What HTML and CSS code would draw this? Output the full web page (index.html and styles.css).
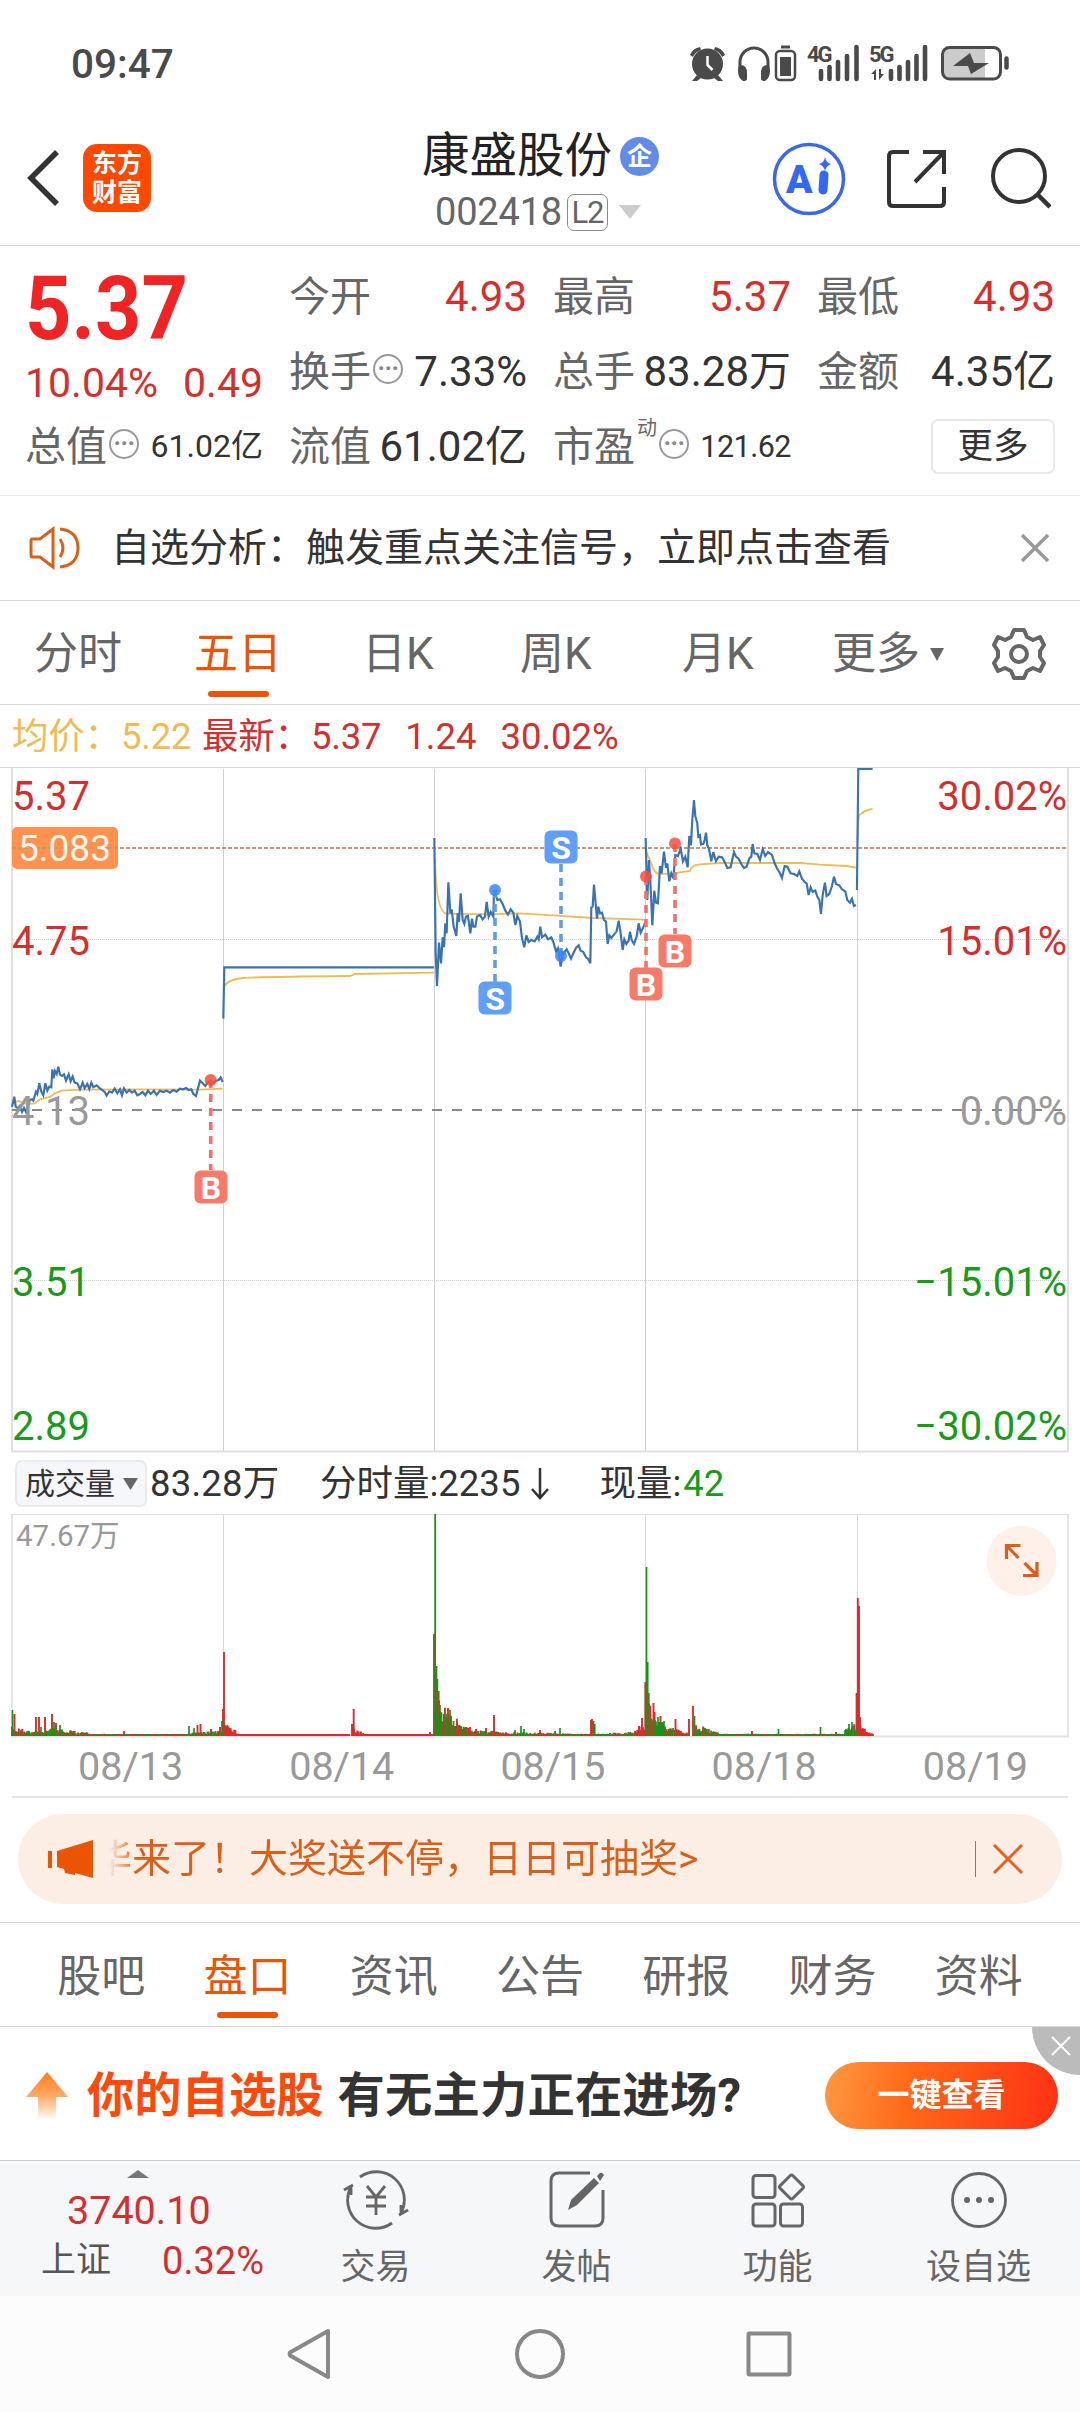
FILE: index.html
```html
<!DOCTYPE html>
<html lang="zh-CN">
<head>
  <meta charset="UTF-8" />
  <title>康盛股份 002418</title>
  <link rel="stylesheet" href="styles.css">
</head>
<body>
  <div class="status-bar">
    <span class="time">09:47</span>
    <svg class="status-icons" width="324" height="40" viewBox="688 43 324 40">
      <g fill="#4a4a4a">
        <circle cx="707.5" cy="64" r="15.5" />
        <path d="M690 55q3-7 10-8l1 3q-6 2-8 7zM725 55q-3-7-10-8l-1 3q6 2 8 7zM697 75l-5 6h5l4-3zM718 75l5 6h-5l-4-3z" />
        <path d="M707.500 56v9l5 5" fill="none" stroke="#fff" stroke-width="2.500" />
        <path d="M740 72V62a14 14 0 0 1 28 0v10" fill="none" stroke="#4a4a4a" stroke-width="3" />
        <path d="M739 65q8-1 8 8v6q0 2-4 2-5-3-5-10zM769 65q-8-1-8 8v6q0 2 4 2 5-3 5-10z" />
        <rect x="776" y="51" width="19" height="29" rx="4" fill="none" stroke="#4a4a4a" stroke-width="2.500" />
        <rect x="780" y="57" width="11" height="19" />
        <rect x="781" y="45.500" width="9" height="3" />
        <path d="M821 71v8M829.500 67v12M838 62v17M847 56v23M856.500 47v32M891 71v8M899.500 67v12M908 62v17M916.500 56v23M925 47v32" stroke="#4a4a4a" stroke-width="4.600" stroke-linecap="round" />
        <path d="M871 74l5-5v11h-2v-6zM884 74l-5 6V69h2v5z" />
        <text x="807" y="62" class="net">4G</text>
        <text x="869" y="62" class="net">5G</text>
        <rect x="943" y="49" width="42" height="29" fill="#ccc" />
        <rect x="942.500" y="47.500" width="58" height="31.500" rx="7" fill="none" stroke="#4a4a4a" stroke-width="3" />
        <path d="M1006.500 58.500v9" stroke="#4a4a4a" stroke-width="4.500" stroke-linecap="round" />
        <path d="M970 53l-17 13h15l3 8 18-11h-15z" />
      </g>
    </svg>
  </div>

  <div class="header">
    <div class="header-left">
      <svg width="36" height="60" viewBox="0 0 36 60"><path d="M31 4L5 30l26 26" fill="none" stroke="#333" stroke-width="5.500" /></svg>
      <div class="logo">东方<br>财富</div>
    </div>
    <div class="stock">
      <div class="stock-name">康盛股份<span class="ent">企</span></div>
      <div class="stock-code">002418<span class="level">L2</span><svg width="22" height="14" viewBox="0 0 22 14"><path d="M0 0h22L11 14z" fill="#ccc" /></svg></div>
    </div>
    <div class="header-right">
      <svg width="76" height="76" viewBox="0 0 76 76">
        <circle cx="38" cy="38" r="34.500" fill="none" stroke="#3c68e8" stroke-width="3.500" />
        <text x="15" y="52" class="ai">A</text>
        <path d="M53 34l-1 15" stroke="#3567f5" stroke-width="9" stroke-linecap="round" />
        <path d="M54 16q1 6 6 7-5 2-6 7-1-5-6-7 5-1 6-7z" fill="#3567f5" />
      </svg>
      <svg width="60" height="60" viewBox="0 0 60 60"><path d="M22 3H6q-4 0-4 4v46q0 4 4 4h47q4 0 4-4V38M36 3h21v22M57 3L28 33" fill="none" stroke="#333" stroke-width="4" /></svg>
      <svg width="62" height="62" viewBox="0 0 62 62"><circle cx="30" cy="28" r="26" fill="none" stroke="#333" stroke-width="4" /><path d="M48 46l13 13" stroke="#333" stroke-width="4.500" /></svg>
    </div>
  </div>

  <div class="quote">
    <div class="price">
      <div class="price-now"><span>5.37</span></div>
      <div class="price-change"><span>10.04%</span><span>0.49</span></div>
    </div>
    <div class="cell"><label>今开</label><b class="up">4.93</b></div>
    <div class="cell"><label>最高</label><b class="up">5.37</b></div>
    <div class="cell"><label>最低</label><b class="up">4.93</b></div>
    <div class="cell"><label>换手</label><i class="dots">···</i><b>7.33%</b></div>
    <div class="cell"><label>总手</label><b>83.28万</b></div>
    <div class="cell"><label>金额</label><b>4.35亿</b></div>
    <div class="cell"><label>总值</label><i class="dots">···</i><b class="small">61.02亿</b></div>
    <div class="cell"><label>流值</label><b>61.02亿</b></div>
    <div class="cell"><label>市盈</label><sup>动</sup><i class="dots">···</i><b class="small pe">121.62</b></div>
    <div class="cell"><span class="more-btn">更多</span></div>
  </div>

  <div class="notice">
    <svg width="52" height="44" viewBox="0 0 52 44" fill="none" stroke="#d9601a" stroke-width="3">
      <path d="M3 13h8L24 3v38L11 31H3q-1 0-1-2V15q0-2 1-2zM31 13q6 9 0 18M31 3q18 2 18 19T31 41" />
    </svg>
    <span>自选分析：触发重点关注信号，立即点击查看</span>
    <svg class="close" width="30" height="30" viewBox="0 0 30 30"><path d="M2 2l26 26M28 2L2 28" stroke="#999" stroke-width="3.500" /></svg>
  </div>

  <div class="period-tabs">
    <span>分时</span>
    <span class="active">五日</span>
    <span>日K</span>
    <span>周K</span>
    <span>月K</span>
    <span>更多<svg width="14" height="13" viewBox="0 0 14 13"><path d="M0 0h14L7 13z" fill="#666" /></svg></span>
    <svg class="gear" width="54" height="54" viewBox="-27 -27 54 54" fill="none" stroke="#666" stroke-width="4" stroke-linejoin="round">
      <path d="M-5-24H5L8-17 14-14 21-17 25-9 21-3V3L25 9 21 17 14 14 8 17 5 24H-5L-8 17-14 14-21 17-25 9-21 3V-3L-25-9-21-17-14-14-8-17Z" />
      <circle r="8" />
    </svg>
  </div>

  <div class="legend">
    <span class="avg">均价：5.22</span>
    <span class="last">最新：5.37</span>
    <span class="last">1.24</span>
    <span class="last">30.02%</span>
  </div>

  <svg class="chart" width="1080" height="686" viewBox="0 767 1080 686">
    <!-- grid -->
    <path d="M223.500 769v682M434.500 769v682M645.500 769v682M857.500 769v682" stroke="#d0d0d0" />
    <path d="M12 768v683M1068 768v683M11 1451.500h1058" stroke="#e0e0e0" stroke-width="2" />
    <path d="M12 939.500h1056M12 1280.500h1056" stroke="#d0d0d0" stroke-dasharray="1 1" />
    <path d="M12 1110h1056" stroke="#888" stroke-width="2" stroke-dasharray="10 10" />
    <rect x="12" y="827" width="106" height="42" rx="5" fill="#ff924e" />
    <path d="M12 848h1056" stroke="#d29370" stroke-width="1.800" stroke-dasharray="4 2" />

    <!-- average line -->
    <g fill="none" stroke="#f0bb55" stroke-width="5.500">
      <path transform="translate(0 740) scale(.3333)" d="M36 1090L55 1083 80 1092 105 1090 120 1078 150 1071 165 1060 185 1052 240 1049 400 1048 600 1049 668 1046M673 740Q682 718 730 714Q760 711 1050 708L1065 702 1302 698" />
      <path transform="translate(420 740) scale(.3333)" d="M45 355Q48 520 80 521L200 523 300 520 400 526 520 534 672 539M677 330Q690 362 696 375 703 402 720 402L760 400 810 393Q815 374 840 373L900 369 1140 369 1200 374 1280 378 1308 383M1313 300Q1313 230 1320 224 1335 210 1358 207" />
    </g>

    <!-- price line -->
    <g fill="none" stroke="#3a73b4" stroke-width="6.500">
      <path transform="translate(0 740) scale(.3333)" d="M36 1100L43 1070 47 1100 55 1105 60 1098 66 1116 72 1104 78 1116 84 1096 90 1080 96 1078 100 1082 108 1055 112 1062 118 1030 124 1055 130 1066 136 1030 142 1052 148 1040 154 1042 157 988 161 1015 165 993 170 1002 175 980 180 1004 186 1008 192 1003 198 1022 206 1003 212 1024 218 1010 224 1028 232 1030 240 1048 248 1028 254 1045 262 1032 268 1047 274 1028 280 1042 290 1036 298 1044 306 1050 314 1056 320 1067 328 1054 336 1058 344 1046 352 1060 360 1048 366 1066 372 1045 380 1058 388 1050 396 1058 404 1052 412 1066 420 1062 428 1056 436 1066 444 1052 452 1062 462 1052 470 1065 480 1052 490 1056 500 1052 510 1058 520 1050 530 1055 540 1046 550 1048 558 1044 566 1050 574 1048 580 1062 588 1068 594 1045 600 1022 608 1030 616 1038 622 1028 630 1022 640 1028 648 1022 656 1020 662 1012 668 1026M670 836L673 682 1302 682" />
      <path transform="translate(420 740) scale(.3333)" d="M43 294L47 640 51 738 57 608 63 670 68 592 72 622 76 550 80 580 85 427 91 520 95 508 101 560 109 588 113 520 117 546 122 460 128 540 133 552 138 530 144 528 151 580 156 536 160 560 166 560 171 530 180 525 188 538 195 530 200 486 206 530 212 516 220 530 222 450 226 460 232 480 240 478 248 492 256 512 264 524 272 508 280 518 286 555 292 528 300 545 306 594 313 622 319 586 326 606 334 600 344 604 352 590 356 598 361 560 366 592 376 584 384 598 394 592 400 606 408 634 414 625 422 680 428 645 434 636 440 628 446 640 453 656 460 640 468 624 476 616 482 632 490 636 498 652 504 656 511 670 514 502 518 500 522 434 527 490 531 536 535 500 540 520 546 518 552 540 558 545 563 612 568 586 574 594 582 584 590 574 596 542 601 572 608 630 613 598 619 612 626 602 630 575 635 600 642 612 650 590 656 550 662 578 670 562 677 545M677 294L682 480 687 360 691 420 697 556 703 452 708 488 714 490 720 378 725 400 732 335 738 384 742 370 748 424 754 400 760 415 766 345 774 348 782 326 789 364 796 350 803 382 808 288 813 316 817 240 822 180 826 228 832 250 835 290 840 286 843 314 850 312 854 300 858 278 862 316 867 326 874 364 880 336 888 364 896 350 906 352 914 366 922 384 932 382 942 336 948 350 956 356 964 372 972 384 980 380 988 355 994 350 998 312 1003 340 1012 342 1020 360 1028 328 1036 348 1044 336 1056 345 1064 370 1072 386 1080 400 1086 414 1094 378 1102 380 1112 400 1122 402 1132 408 1138 394 1146 416 1154 426 1160 430 1166 465 1172 442 1178 456 1186 452 1192 470 1198 480 1203 522 1208 466 1215 428 1220 468 1228 462 1236 438 1242 410 1248 432 1258 436 1266 448 1276 454 1282 480 1290 488 1296 476 1302 498 1308 495M1311 450L1315 87 1358 87" />
    </g>

    <!-- axis labels -->
    <g class="axis">
      <text x="12" y="809.500" fill="#d32f2f">5.37</text>
      <text x="18" y="861" class="cost">5.083</text>
      <text x="12" y="954.500" fill="#d32f2f">4.75</text>
      <text x="12" y="1124.500" fill="#999">4.13</text>
      <text x="12" y="1295.500" fill="#1a9a1a">3.51</text>
      <text x="12" y="1439.500" fill="#1a9a1a">2.89</text>
      <g text-anchor="end">
        <text x="1067" y="809.500" fill="#d32f2f">30.02%</text>
        <text x="1067" y="954.500" fill="#d32f2f">15.01%</text>
        <text x="1067" y="1124.500" fill="#999">0.00%</text>
        <text x="1067" y="1295.500" fill="#1a9a1a">−15.01%</text>
        <text x="1067" y="1439.500" fill="#1a9a1a">−30.02%</text>
      </g>
    </g>

    <!-- buy / sell markers -->
    <g class="mark buy">
      <path d="M210.700 1080v90M646 877v91M675 844v90" />
      <circle cx="210.700" cy="1080" r="6" /><circle cx="646" cy="876.500" r="6" /><circle cx="675" cy="843.500" r="6" />
      <rect x="194.500" y="1170.500" width="33" height="33" rx="6" />
      <rect x="629.500" y="967.500" width="33" height="33" rx="6" />
      <rect x="658.500" y="934.500" width="33" height="33" rx="6" />
      <text x="211" y="1199">B</text><text x="646" y="996">B</text><text x="675" y="963">B</text>
    </g>
    <g class="mark sell">
      <path d="M495 890v92M561 956v-94" />
      <circle cx="495" cy="890" r="6" /><circle cx="561" cy="956" r="6" />
      <rect x="478.500" y="981.500" width="33" height="33" rx="6" />
      <rect x="544.500" y="830.500" width="33" height="33" rx="6" />
      <text x="495" y="1010">S</text><text x="561" y="859">S</text>
    </g>
  </svg>

  <div class="volume-info">
    <span class="select">成交量<svg width="15" height="12" viewBox="0 0 15 12"><path d="M0 0h15L7.500 12z" fill="#666" /></svg></span>
    <span class="vol-total">83.28万</span>
    <span class="vol-min">分时量:2235</span>
    <svg class="down" width="18" height="32" viewBox="0 0 18 32"><path d="M9 0v30M1 21l8 9 8-9" fill="none" stroke="#333" stroke-width="2.500" /></svg>
    <span>现量:<em>42</em></span>
  </div>

  <svg class="volume" width="1080" height="224" viewBox="0 1514 1080 224">
    <path d="M223.500 1514v222M434.500 1514v222M645.500 1514v222M857.500 1514v222" stroke="#d8d8d8" />
    <path d="M12 1514.500h1056" stroke="#e0e0e0" />
    <path d="M12 1514v223M1068 1514v223M11 1736.500h1058" stroke="#e4e4e4" stroke-width="2" fill="none" />
    <text x="16" y="1545.500" class="vol-max">47.67万</text>
    <g id="bars"></g>
    <circle cx="1021.500" cy="1561" r="35" fill="#fff1e9" />
    <path d="M1006.500 1559v-13.500h14M1006.500 1545.500l12 12.500M1037 1562v13.500h-14M1037 1575.500l-12.500-12.500" fill="none" stroke="#d9601a" stroke-width="3.200" />
  </svg>

  <div class="dates">
    <span>08/13</span><span>08/14</span><span>08/15</span><span>08/18</span><span>08/19</span>
  </div>

  <div class="promo">
    <svg width="46" height="40" viewBox="0 0 46 40" fill="#ea5504"><path d="M0 12h4v17H0zM9 12L45 1v38l-18-5v2l-10-2-1-4-7-2z" /></svg>
    <div class="promo-text"><span>华来了！大奖送不停，日日可抽奖&gt;</span></div>
    <i class="bar"></i>
    <svg width="32" height="32" viewBox="0 0 32 32"><path d="M2 2l28 28M30 2L2 30" stroke="#e0621c" stroke-width="3" /></svg>
  </div>

  <div class="info-tabs">
    <span>股吧</span><span class="active">盘口</span><span>资讯</span><span>公告</span><span>研报</span><span>财务</span><span>资料</span>
  </div>

  <div class="banner">
    <svg width="42" height="48" viewBox="0 0 42 48">
      <defs><linearGradient id="up" x1="0" y1="0" x2="0" y2="1"><stop offset="0" stop-color="#ff7d1e" /><stop offset=".5" stop-color="#ffa965" /><stop offset="1" stop-color="#fff" /></linearGradient></defs>
      <path d="M21 0l21 25H30v23H12V25H0z" fill="url(#up)" />
    </svg>
    <span class="hot">你的自选股</span>
    <span class="ask">有无主力正在进场?</span>
    <span class="go">一键查看</span>
    <div class="corner"><svg width="20" height="20" viewBox="0 0 20 20"><path d="M1 1l18 18M19 1L1 19" stroke="#fff" stroke-width="2" /></svg></div>
  </div>

  <div class="toolbar">
    <div class="index">
      <svg width="22" height="8" viewBox="0 0 22 8"><path d="M11 0l11 8H0z" fill="#777" /></svg>
      <div class="index-value">3740.10</div>
      <div class="index-row"><span>上证</span><b>0.32%</b></div>
    </div>
    <div class="tool">
      <svg width="66" height="60" viewBox="-33 -30 66 60" fill="none" stroke="#666" stroke-width="2.800">
        <path d="M-16-23A28 28 0 0 1 25 13M16 23A28 28 0 0 1-25-13M23 15l9-5M25 14V5M-23-15l-9 5M-25-14V-5" />
        <path d="M-9-14L0-3 9-14M0-3V15M-10-3h20M-10 6h20" />
      </svg>
      <span>交易</span>
    </div>
    <div class="tool">
      <svg width="60" height="60" viewBox="0 0 60 60" fill="none" stroke="#666" stroke-width="3">
        <path d="M43 3H12Q4 3 4 11v37q0 8 8 8h36q8 0 8-8V20" />
        <path d="M21 40l3-10L47 8l5 5-22 22zM50 6l3-3q2-1 4 2l-4 6z" fill="#666" stroke="none" />
      </svg>
      <span>发帖</span>
    </div>
    <div class="tool">
      <svg width="60" height="60" viewBox="0 0 60 60" fill="none" stroke="#666" stroke-width="3">
        <rect x="5" y="5.500" width="22" height="22" rx="3" /><rect x="5" y="34" width="22" height="22" rx="3" /><rect x="32.500" y="34" width="22" height="22" rx="3" />
        <rect x="-9" y="-9" width="18" height="18" rx="2" transform="translate(43.500 17) rotate(45)" />
      </svg>
      <span>功能</span>
    </div>
    <div class="tool">
      <svg width="60" height="60" viewBox="0 0 60 60"><circle cx="30" cy="30" r="26.500" fill="none" stroke="#666" stroke-width="2.800" /><g fill="#666"><circle cx="18" cy="30" r="3" /><circle cx="30" cy="30" r="3" /><circle cx="42" cy="30" r="3" /></g></svg>
      <span>设自选</span>
    </div>
  </div>

  <div class="nav">
    <svg width="1080" height="116" viewBox="0 0 1080 116" fill="none" stroke="#888" stroke-width="4" stroke-linejoin="round">
      <path d="M328 35v46L290 59.500q-1-1.500 0-3z" />
      <circle cx="540" cy="58" r="23" />
      <rect x="748.500" y="37.500" width="41" height="41" rx="1" />
    </svg>
  </div>

  <script>
    const base = 1736;
    let red = "", green = "";

    function bar(x, h, color) {
      const d = "M" + x + " " + base + "v-" + h;
      if (color === "r") red += d; else green += d;
    }

    // low volume between the spikes: [from, to, start height, end height, red share]
    const runs = [
      [12, 33, 9, 4, 0.6], [33, 62, 4, 8, 0.5], [62, 88, 6, 3, 0.5], [88, 190, 2, 1.5, 0.7], [190, 222, 3, 5, 0.6],
      [225, 240, 13, 2, 1], [240, 350, 1, 1, 1], [354, 366, 8, 1, 1], [366, 434, 1, 1, 1],
      [438, 450, 32, 22, 0.5], [450, 475, 20, 4, 0.5], [475, 540, 5, 3, 0.5], [540, 590, 3, 2, 0.6], [595, 635, 2, 4, 0.5],
      [635, 645, 5, 12, 0.9], [648, 665, 30, 12, 0.5], [665, 690, 10, 3, 0.7], [695, 718, 11, 3, 0.3],
      [718, 845, 2, 2, 0.5], [845, 857, 6, 12, 0.4], [858, 874, 12, 1, 1]
    ];
    runs.forEach(([a, b, h1, h2, share]) => {
      for (let x = a; x < b; x += 1.15) {
        const n = Math.abs(Math.sin(x * 12.9898) * 43758.5453) % 1;
        const m = Math.abs(Math.sin(x * 78.233) * 12543.123) % 1;
        const h = (h1 + (h2 - h1) * (x - a) / (b - a)) * (0.5 + n * 0.65);
        bar(x.toFixed(1), Math.max(2, h).toFixed(1), m <= share ? "r" : "g");
      }
    });

    const spikes = [
      [12.5, 26, "g"], [14.5, 22, "r"], [36, 19, "r"], [39, 19, "r"], [41, 9, "g"], [45, 19, "r"], [52, 22, "r"], [54, 14, "g"],
      [56, 13, "r"], [60, 11, "g"], [124, 5, "r"], [189, 10, "g"], [194, 8, "g"], [197.5, 11, "r"], [200.5, 12, "r"], [211, 7, "r"],
      [220, 9, "r"], [222, 15, "g"], [223, 27, "r"], [224, 84, "r"], [352, 12, "r"], [353.7, 27, "r"], [430, 4, "r"],
      [434, 102, "r"], [435.2, 222, "g"], [436.5, 70, "g"], [437.4, 57, "g"], [438.6, 45, "r"], [440, 31, "g"], [448, 28, "r"],
      [450, 26, "g"], [453.5, 15, "g"], [457, 14, "r"], [470, 9, "r"], [476, 7, "r"], [486, 8, "r"], [494, 21, "r"], [515, 6, "g"],
      [521, 10, "g"], [524, 7, "g"], [540, 6, "r"], [555, 5, "g"], [560, 8, "g"], [591, 16, "r"], [592, 17, "r"], [593.5, 15, "g"],
      [594.7, 12, "g"], [639, 10, "r"], [642, 18, "r"], [645.3, 54, "r"], [646.5, 169, "g"], [647.7, 74, "g"], [648.7, 43, "r"],
      [653.5, 33, "r"], [654.6, 24, "r"], [658, 19, "g"], [660.5, 20, "r"], [664, 15, "g"], [675.5, 17, "r"], [689, 17, "r"],
      [693, 30, "r"], [694.5, 20, "g"], [707, 7, "g"], [752, 5, "r"], [778.5, 7, "g"], [820.5, 9, "g"], [836, 4, "r"],
      [849, 12, "g"], [852, 14, "g"], [856.6, 43, "r"], [857.8, 138, "r"], [859, 130, "r"], [860, 19, "r"]
    ];
    spikes.forEach(s => bar(s[0], s[1], s[2]));

    document.getElementById("bars").innerHTML =
      '<path d="' + red + '" stroke="#dc2b2b" stroke-width="1.9"/>' +
      '<path d="' + green + '" stroke="#1f8f1a" stroke-width="1.7"/>';
  </script>
</body>
</html>
```
FILE: styles.css
```css
* {
  box-sizing: border-box;
}

body {
  margin: 0;
  width: 1080px;
  height: 2412px;
  overflow: hidden;
  background: #fff;
  color: #333;
  font-family: Roboto, "Noto Sans CJK SC", sans-serif;
}

svg {
  display: block;
  flex: none;
}

b, i, em {
  font-weight: normal;
  font-style: normal;
}

.status-bar {
  height: 126px;
  padding: 43px 68px 0 71px;
  display: flex;
  justify-content: space-between;
}

.time {
  font-size: 40.500px;
  font-weight: 500;
  line-height: 43px;
  color: #4a4a4a;
}

.net {
  font-size: 22px;
  font-weight: 700;
  letter-spacing: -2px;
}

.header {
  height: 120px;
  border-bottom: 1px solid #d6d6d6;
  display: grid;
  grid-template-columns: 300px 480px 300px;
}

.header-left {
  display: flex;
  align-items: center;
  padding: 0 0 15px 26px;
}

.logo {
  width: 68px;
  height: 68px;
  margin-left: 21px;
  padding-top: 5px;
  border-radius: 14px;
  background: #ff4800;
  color: #fff;
  font-size: 25px;
  font-weight: 700;
  line-height: 29px;
  text-align: center;
}

.stock-name {
  display: flex;
  align-items: center;
  padding: 0 0 0 122px;
  height: 60px;
  font-size: 47.500px;
  line-height: 60px;
  color: #222;
}

.ent {
  width: 39px;
  height: 39px;
  margin-left: 8px;
  border-radius: 50%;
  background: #628ce8;
  color: #fff;
  font-size: 25px;
  font-weight: 700;
  line-height: 39px;
  text-align: center;
}

.stock-code {
  display: flex;
  align-items: center;
  padding-left: 135px;
  margin-top: 7px;
  font-size: 38px;
  line-height: 38px;
  letter-spacing: -0.200px;
  color: #666;
}

.level {
  width: 41px;
  height: 37px;
  margin: 0 11px 0 5px;
  border: 1.500px solid #888;
  border-radius: 7px;
  font-size: 31px;
  line-height: 35px;
  text-align: center;
  letter-spacing: -1px;
}

.header-right {
  display: flex;
  align-items: center;
  padding-bottom: 14px;
}

.header-right svg:nth-child(1) {
  margin: 0 40px 0 -9px;
}

.header-right svg:nth-child(2) {
  margin-right: 42px;
}

.ai {
  font-size: 39px;
  font-weight: 900;
  fill: #3567f5;
}

.quote {
  height: 250px;
  padding: 13px 25px 0 25px;
  border-bottom: 1px solid #eaeaea;
  display: grid;
  grid-template-columns: repeat(4, 1fr);
  grid-template-rows: repeat(3, 75px);
  column-gap: 26px;
}

.price {
  grid-row: span 2;
  color: #d32f2f;
}

.price-now {
  height: 97px;
  font-size: 89px;
  font-weight: 700;
  line-height: 99px;
  color: #f02424;
}

.price-now span {
  display: inline-block;
  transform: scaleX(0.910);
  transform-origin: left;
}

.price-change {
  display: flex;
  justify-content: space-between;
  font-size: 41px;
  line-height: 55px;
}

.cell {
  display: flex;
  align-items: center;
  line-height: 75px;
  font-size: 42px;
  white-space: nowrap;
}

.cell label {
  padding-top: 2px;
  font-size: 41px;
  color: #666;
}

.cell b {
  margin-left: auto;
}

.cell .small {
  font-size: 32px;
}

.cell .pe {
  font-size: 30.500px;
  letter-spacing: -0.500px;
}

.up {
  color: #d32f2f;
}

.dots {
  width: 30px;
  height: 30px;
  margin: -5px 0 0 2px;
  border: 2px solid #999;
  border-radius: 50%;
  color: #888;
  font-size: 25px;
  font-weight: 700;
  line-height: 26px;
  letter-spacing: -0.500px;
  text-align: center;
}

.cell sup {
  margin: -38px 0 0 2px;
  font-size: 20px;
  line-height: 20px;
  color: #666;
}

.more-btn {
  width: 124px;
  height: 55px;
  margin-left: auto;
  border: 2px solid #e8e8e8;
  border-radius: 7px;
  font-size: 35.500px;
  line-height: 50px;
  text-align: center;
}

.notice {
  height: 105px;
  padding: 0 30px 0 29px;
  border-bottom: 1px solid #d6d6d6;
  display: flex;
  align-items: center;
  font-size: 39px;
  line-height: 103px;
}

.notice span {
  margin-left: 30px;
}

.close {
  margin-left: auto;
}

.period-tabs {
  height: 104px;
  padding-left: 34px;
  border-bottom: 1px solid #d6d6d6;
  display: grid;
  grid-template-columns: 160px 168px 158px 162px 150px 160px 54px;
  font-size: 44px;
  line-height: 106px;
  color: #666;
}

.period-tabs span {
  display: flex;
  align-items: center;
}

.period-tabs span svg {
  margin-left: 10px;
}

.active {
  position: relative;
  color: #ea5504;
}

.active::after {
  content: "";
  position: absolute;
  left: 14px;
  bottom: 10px;
  width: 61px;
  height: 6px;
  border-radius: 3px;
  background: #ea5504;
}

.gear {
  align-self: center;
}

.legend {
  height: 63px;
  padding-left: 12px;
  border-bottom: 1px solid #d6d6d6;
  display: flex;
  font-size: 36.500px;
  line-height: 64px;
}

.avg {
  width: 190px;
  color: #f0bb55;
}

.last {
  margin-right: 24px;
  color: #d32f2f;
}

.avg, .last:nth-child(2) {
  letter-spacing: -0.200px;
}

.chart {
  margin-top: -1px;
}

.axis {
  font-size: 40px;
}

.axis .cost {
  font-size: 37px;
  fill: #fff5ea;
}

.mark {
  font-size: 32px;
  font-weight: 700;
  text-anchor: middle;
}

.mark path {
  stroke-width: 3.600;
  stroke-dasharray: 8 6;
}

.mark text {
  fill: #fff;
}

.buy {
  stroke: none;
  fill: #fa7a69;
}

.buy circle {
  fill: #f4503f;
  fill-opacity: 0.850;
}

.buy path {
  stroke: #ee7468;
}

.sell {
  fill: #5f9ff8;
}

.sell circle {
  fill: #3b86f5;
  fill-opacity: 0.850;
}

.sell path {
  stroke: #609ce8;
}

.volume-info {
  height: 61px;
  padding-left: 15px;
  display: flex;
  align-items: center;
  font-size: 36.500px;
  line-height: 60px;
}

.select {
  width: 132px;
  height: 47px;
  padding-left: 8px;
  border: 2px solid #e8eaee;
  border-radius: 7px;
  background: #f6f7fa;
  display: flex;
  align-items: center;
  justify-content: space-between;
  padding-right: 7px;
  font-size: 30px;
  line-height: 43px;
}

.vol-total {
  width: 173px;
  padding-left: 3px;
  letter-spacing: 0.200px;
}

.down {
  margin: 0 50px 0 11px;
}

.volume-info em {
  margin-left: 2px;
  color: #1a9a1a;
}

.vol-max {
  font-size: 29.500px;
  fill: #999;
}

.dates {
  height: 60px;
  margin: 0 12px;
  border-bottom: 2px solid #e4e4e4;
  display: grid;
  grid-template-columns: repeat(5, 211.200px);
  font-size: 39.500px;
  line-height: 58px;
  text-align: center;
  color: #999;
}

.dates span {
  padding-left: 26px;
}

.promo {
  height: 90px;
  margin: 16px 18px 18px;
  padding: 0 38px 0 30px;
  border-radius: 45px;
  background: #fdeee5;
  display: flex;
  align-items: center;
  font-size: 39px;
  line-height: 89px;
  color: #d9601a;
}

.promo-text {
  flex: 1;
  margin-left: 15px;
  overflow: hidden;
  white-space: nowrap;
  -webkit-mask-image: linear-gradient(to right, transparent, #000 28px);
  mask-image: linear-gradient(to right, transparent, #000 28px);
}

.promo-text span {
  margin-left: -16px;
}

.bar {
  width: 1px;
  height: 36px;
  margin-right: 16px;
  background: #d9601a;
}

.info-tabs {
  height: 105px;
  padding: 0 28px;
  border-top: 1px solid #d6d6d6;
  border-bottom: 1px solid #d6d6d6;
  display: flex;
  font-size: 44px;
  line-height: 108px;
  text-align: center;
  color: #666;
}

.info-tabs span {
  flex: 1;
}

.info-tabs .active {
  color: #ea5504;
}

.info-tabs .active::after {
  left: 43px;
  bottom: 8px;
}

.banner {
  position: relative;
  height: 133px;
  padding: 4px 22px 0 26px;
  display: flex;
  align-items: center;
  font-size: 47.300px;
  font-weight: 700;
  line-height: 130px;
  white-space: nowrap;
}

.hot {
  margin-left: 19px;
  color: #ff4a0c;
}

.ask {
  margin-left: 14px;
  letter-spacing: 0.200px;
}

.go {
  width: 233px;
  height: 67px;
  margin-left: auto;
  border-radius: 34px;
  background: linear-gradient(100deg, #ff9a42, #ff6a1a 35%, #ff3014);
  color: #fff;
  font-size: 32px;
  line-height: 67px;
  text-align: center;
}

.corner {
  position: absolute;
  top: 0;
  right: 0;
  width: 48px;
  height: 48px;
  padding: 9px 0 0 19px;
  border-bottom-left-radius: 48px;
  background: #bbb;
}

.toolbar {
  height: 136px;
  border-top: 1px solid #d0d0d0;
  background: #f6f7f9;
  display: flex;
}

.index {
  width: 275px;
  padding-top: 9px;
}

.index svg {
  margin-left: 127px;
}

.index-value {
  margin-top: 9px;
  font-size: 39.500px;
  line-height: 48px;
  padding-left: 67px;
  color: #d32f2f;
}

.index-row {
  display: flex;
  justify-content: space-between;
  padding: 0 11px 0 41px;
  font-size: 35px;
  line-height: 52px;
}

.index-row span {
  color: #555;
}

.index-row b {
  font-size: 38px;
  color: #d32f2f;
}

.tool {
  width: 201px;
  padding-top: 9px;
  display: flex;
  flex-direction: column;
  align-items: center;
  font-size: 35px;
  line-height: 76px;
  color: #666;
}

.nav {
  height: 116px;
  background: #fcfcfc;
}
```
